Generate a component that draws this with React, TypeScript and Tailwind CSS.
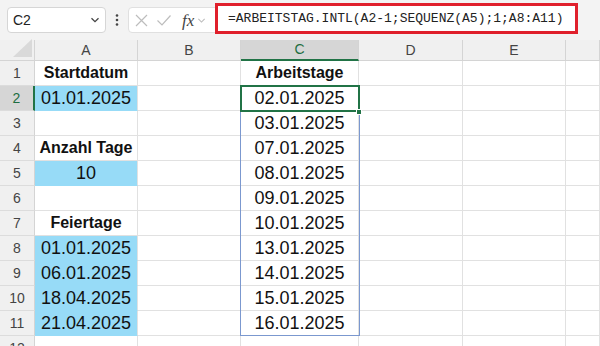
import React from "react";

const GRID = "#e1e1e1";
const HDR_BORDER = "#d4d4d4";
const BLUE = "#97dbf7";

type Cell = { t?: string; bold?: boolean; blue?: boolean };

const rows: { a: Cell; c: Cell }[] = [
  { a: { t: "Startdatum", bold: true }, c: { t: "Arbeitstage", bold: true } },
  { a: { t: "01.01.2025", blue: true }, c: { t: "02.01.2025" } },
  { a: {}, c: { t: "03.01.2025" } },
  { a: { t: "Anzahl Tage", bold: true }, c: { t: "07.01.2025" } },
  { a: { t: "10", blue: true }, c: { t: "08.01.2025" } },
  { a: {}, c: { t: "09.01.2025" } },
  { a: { t: "Feiertage", bold: true }, c: { t: "10.01.2025" } },
  { a: { t: "01.01.2025", blue: true }, c: { t: "13.01.2025" } },
  { a: { t: "06.01.2025", blue: true }, c: { t: "14.01.2025" } },
  { a: { t: "18.04.2025", blue: true }, c: { t: "15.01.2025" } },
  { a: { t: "21.04.2025", blue: true }, c: { t: "16.01.2025" } },
  { a: {}, c: {} },
];

function CellView({ cell, w }: { cell: Cell; w: string }) {
  return (
    <div
      className={`${w} h-full shrink-0 flex items-center justify-center border-r border-b text-[#111] leading-none ${
        cell.bold ? "font-bold text-[16px]" : "text-[18px]"
      }`}
      style={{
        backgroundColor: cell.blue ? BLUE : "#ffffff",
        borderRightColor: GRID,
        borderBottomColor: cell.blue ? BLUE : GRID,
      }}
    >
      {cell.t}
    </div>
  );
}

function Empty({ w }: { w: string }) {
  return (
    <div
      className={`${w} h-full shrink-0 border-r border-b bg-white`}
      style={{ borderRightColor: GRID, borderBottomColor: GRID }}
    />
  );
}

export default function App() {
  return (
    <div
      className="w-[600px] h-[346px] overflow-hidden bg-white"
      style={{ fontFamily: '"Liberation Sans", Arial, sans-serif' }}
    >
      {/* Top bar */}
      <div className="h-[40px] bg-[#f3f3f3] flex items-start pt-[7px] pl-[7px]">
        <div className="w-[99px] h-[26px] bg-white border border-[#d6d6d6] rounded-[4px] flex items-center justify-between pl-[5px] pr-[5px]">
          <span className="text-[14px] text-[#222]">C2</span>
          <svg width="10" height="10" viewBox="0 0 10 10">
            <path d="M1.5 3.2 L5 6.7 L8.5 3.2" fill="none" stroke="#444" strokeWidth="1.3" />
          </svg>
        </div>
        <div className="w-[22px] h-[26px] flex items-center justify-center">
          <svg width="4" height="14" viewBox="0 0 4 14">
            <circle cx="2" cy="2.5" r="1.3" fill="#444" />
            <circle cx="2" cy="7" r="1.3" fill="#444" />
            <circle cx="2" cy="11.5" r="1.3" fill="#444" />
          </svg>
        </div>
        <div className="w-[90px] h-[26px] bg-white border border-[#e0e0e0] rounded-l-[4px] flex items-center pl-[5px] gap-[7px] -mr-[3px]">
          <svg width="15" height="15" viewBox="0 0 15 15">
            <path d="M2 2 L13 13 M13 2 L2 13" stroke="#bdbdbd" strokeWidth="1.2" />
          </svg>
          <svg width="16" height="15" viewBox="0 0 16 15">
            <path d="M1.5 7.5 L6 12 L14.5 2.5" fill="none" stroke="#bdbdbd" strokeWidth="1.2" />
          </svg>
          <span
            className="italic text-[17px] text-[#444] leading-none ml-[3px]"
            style={{ fontFamily: '"Liberation Serif", "Times New Roman", serif' }}
          >
            fx
          </span>
          <svg width="9" height="9" viewBox="0 0 10 10" className="-ml-[4px]">
            <path d="M1.5 3.2 L5 6.7 L8.5 3.2" fill="none" stroke="#bdbdbd" strokeWidth="1.2" />
          </svg>
        </div>
        <div className="w-[363px] h-[31px] -mt-[4px] bg-white border-[3px] border-[#e0202c] flex items-center pl-[10px]">
          <span
            className="text-[13px] text-[#222] leading-none whitespace-nowrap"
            style={{ fontFamily: '"Liberation Mono", "Courier New", monospace' }}
          >
            =ARBEITSTAG.INTL(A2-1;SEQUENZ(A5);1;A8:A11)
          </span>
        </div>
      </div>

      {/* Grid */}
      <div className="relative">
        {/* Header row */}
        <div className="flex h-[21px] bg-[#f0f0f0] text-[14px] text-[#444]">
          <div
            className="w-[35px] h-full shrink-0 border-r border-b flex items-end justify-end pr-[2px] pb-[3px]"
            style={{ borderColor: HDR_BORDER }}
          >
            <svg width="19" height="18" viewBox="0 0 19 18">
              <path d="M19 0 L19 18 L0 18 Z" fill="#d9d9d9" />
            </svg>
          </div>
          {[
            ["A", "w-[103px]"],
            ["B", "w-[103px]"],
          ].map(([l, w]) => (
            <div
              key={l}
              className={`${w} h-full shrink-0 border-r border-b flex items-center justify-center`}
              style={{ borderColor: HDR_BORDER }}
            >
              {l}
            </div>
          ))}
          <div
            className="w-[118px] h-full shrink-0 border-r border-b-2 flex items-center justify-center bg-[#d6d6d6] text-[#1e6e42]"
            style={{ borderRightColor: HDR_BORDER, borderBottomColor: "#217346" }}
          >
            C
          </div>
          {[
            ["D", "w-[104px]"],
            ["E", "w-[103px]"],
            ["", "flex-1"],
          ].map(([l, w], i) => (
            <div
              key={i}
              className={`${w} h-full shrink-0 border-r border-b flex items-center justify-center`}
              style={{ borderColor: HDR_BORDER }}
            >
              {l}
            </div>
          ))}
        </div>

        {rows.map((r, i) => {
          const sel = i === 1;
          return (
            <div key={i} className="flex h-[25px]">
              <div
                className={`w-[35px] h-full shrink-0 border-b flex items-center justify-center text-[14px] ${
                  sel ? "bg-[#d6d6d6] text-[#1e6e42] border-r-2" : "bg-[#f0f0f0] text-[#444] border-r"
                }`}
                style={{
                  borderRightColor: sel ? "#217346" : HDR_BORDER,
                  borderBottomColor: "#dcdcdc",
                }}
              >
                {i + 1}
              </div>
              <CellView cell={r.a} w="w-[103px]" />
              <Empty w="w-[103px]" />
              <CellView cell={r.c} w="w-[118px]" />
              <Empty w="w-[104px]" />
              <Empty w="w-[103px]" />
              <Empty w="flex-1" />
            </div>
          );
        })}

        {/* Range highlight C2:C11 */}
        <div className="absolute left-[240px] top-[45px] w-[120px] h-[251px] border border-[#7b98cf] pointer-events-none" />
        {/* Active cell C2 */}
        <div className="absolute left-[240px] top-[45px] w-[120px] h-[27px] border-2 border-[#217346] pointer-events-none" />
        <div className="absolute left-[356px] top-[69px] w-[6px] h-[6px] bg-[#217346] border border-white pointer-events-none" />
      </div>
    </div>
  );
}
